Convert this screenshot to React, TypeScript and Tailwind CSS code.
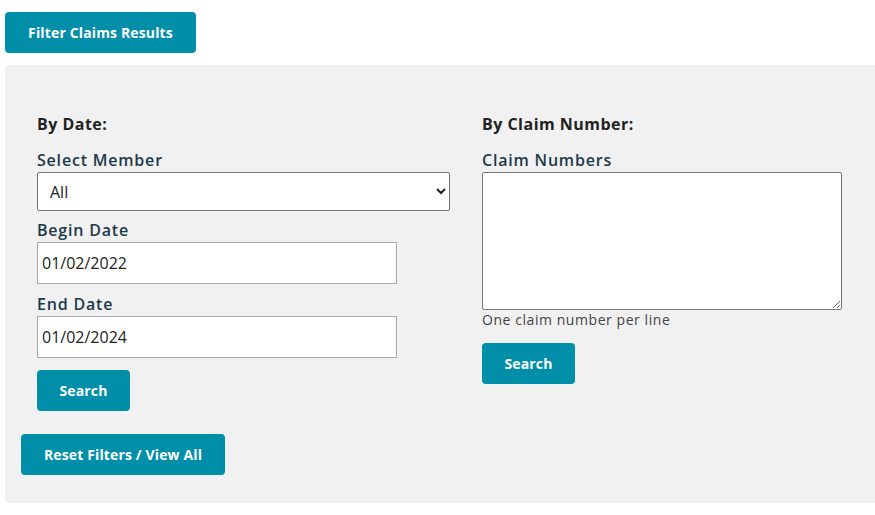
const font = { fontFamily: '"Open Sans", "DejaVu Sans", sans-serif' };

function TealButton({ children, className = "" }: { children: React.ReactNode; className?: string }) {
  return (
    <button
      type="button"
      className={`h-[41px] rounded-[4px] bg-[#008ea9] text-[14px] font-bold tracking-[0.01em] text-white ${className}`}
    >
      {children}
    </button>
  );
}

function Label({ children }: { children: React.ReactNode }) {
  return (
    <label className="block text-[16px] font-semibold leading-6 tracking-[0.05em] text-[#1d3949]">
      {children}
    </label>
  );
}

export default function App() {
  return (
    <div className="min-h-[515px] bg-white pt-3 pl-[5px] text-[#222]" style={font}>
      <TealButton className="w-[191px]">Filter Claims Results</TealButton>

      <div className="mt-3 w-[880px] rounded-bl-[4px] bg-[#f1f1f1] px-4 pt-[47px] pb-[28px]">
        <div className="flex">
          <div className="w-[445px] px-4">
            <h3 className="text-[16px] font-bold leading-6 tracking-[0.03em]">By Date:</h3>

            <div className="mt-3">
              <Label>Select Member</Label>
              <select className="h-[39px] w-[413px] rounded-[2px] border border-[#767676] bg-white pl-2 text-[16px] text-[#222]">
                <option>All</option>
              </select>
            </div>

            <div className="mt-[7px]">
              <Label>Begin Date</Label>
              <input
                defaultValue="01/02/2022"
                className="h-[42px] w-[360px] border border-[#a4abb0] bg-white px-1 text-[16px] text-[#222]"
              />
            </div>

            <div className="mt-2">
              <Label>End Date</Label>
              <input
                defaultValue="01/02/2024"
                className="h-[42px] w-[360px] border border-[#a4abb0] bg-white px-1 text-[16px] text-[#222]"
              />
            </div>

            <TealButton className="mt-3 h-[40px] w-[93px]">Search</TealButton>
          </div>

          <div className="flex-1 px-4">
            <h3 className="text-[16px] font-bold leading-6 tracking-[0.03em]">By Claim Number:</h3>

            <div className="mt-3">
              <Label>Claim Numbers</Label>
              <textarea className="block h-[138px] w-[360px] rounded-[2px] border border-[#767676] bg-white" />
              <p className="text-[14px] leading-5 tracking-[0.04em] text-[#444]">One claim number per line</p>
            </div>

            <TealButton className="mt-[13px] w-[93px]">Search</TealButton>
          </div>
        </div>

        <TealButton className="mt-[23px] w-[204px]">Reset Filters / View All</TealButton>
      </div>
    </div>
  );
}
